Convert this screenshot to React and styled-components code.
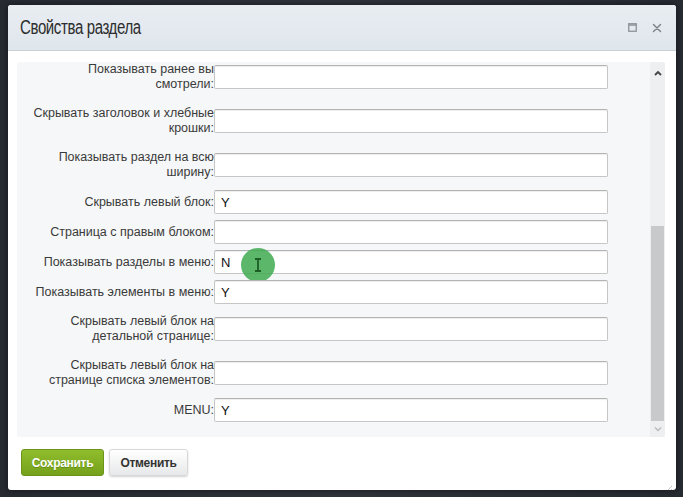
import React from "react";
import styled, { createGlobalStyle } from "styled-components";

const GlobalStyle = createGlobalStyle`
  html, body { margin: 0; padding: 0; }
  body {
    background: #2a2e35;
    font-family: "Liberation Sans", Arial, sans-serif;
  }
`;

const Backdrop = styled.div`
  width: 683px;
  height: 497px;
  box-sizing: border-box;
  padding: 5px 7px 7px 8px;
  background: linear-gradient(90deg, #262a31 0%, #2f333b 50%, #262a31 100%);
`;

const Dialog = styled.div`
  position: relative;
  height: 485px;
  background: #fff;
  border-radius: 3px;
  display: flex;
  flex-direction: column;
  overflow: hidden;
  box-shadow: 0 0 6px rgba(0, 0, 0, 0.5);
`;

const Header = styled.div`
  height: 45px;
  flex: none;
  display: flex;
  align-items: center;
  padding: 0 14px 0 12px;
  background: linear-gradient(#e8edf2, #dfe6ec);
  border-bottom: 1px solid #c9d0d6;
`;

const Title = styled.div`
  flex: 1;
  font-size: 20px;
  color: #2d2d2d;
  letter-spacing: -0.5px;
  transform: scaleX(0.75);
  transform-origin: left center;
  white-space: nowrap;
`;

const HeaderIcons = styled.div`
  display: flex;
  align-items: center;
  gap: 15px;
  color: #8a9096;
`;

const Body = styled.div`
  flex: 1;
  display: flex;
  flex-direction: column;
  padding: 11px 11px 0 9px;
`;

const Panel = styled.div`
  height: 375px;
  display: flex;
  background: #f6f7f8;
  border-radius: 2px;
  overflow: hidden;
`;

const Form = styled.div`
  flex: 1;
  overflow: hidden;
  padding-right: 42px;
`;

const Rows = styled.div`
  margin-top: -4px;
  display: flex;
  flex-direction: column;
  gap: 6px;
`;

const Row = styled.div`
  display: grid;
  grid-template-columns: 197px 1fr;
  align-items: center;
`;

const Label = styled.div`
  text-align: right;
  font-size: 12.5px;
  line-height: 15px;
  color: #3a3a3a;
  padding: ${(p) => (p.$multi ? "4px 0" : "0")};
  white-space: nowrap;
`;

const Field = styled.div`
  position: relative;
`;

const Input = styled.input`
  display: block;
  width: 100%;
  height: 24px;
  box-sizing: border-box;
  border: 1px solid #c6c6c6;
  border-top-color: #b3b3b3;
  border-radius: 2px;
  background: #fff;
  box-shadow: inset 0 1px 1px rgba(0, 0, 0, 0.07);
  padding: 0 6px;
  font-family: "Liberation Sans", Arial, sans-serif;
  font-size: 13px;
  color: #111;
  outline: none;
`;

const Cursor = styled.div`
  position: absolute;
  left: 27px;
  top: -2px;
  width: 34px;
  height: 34px;
  border-radius: 50%;
  background: rgba(64, 170, 80, 0.85);
  display: flex;
  align-items: center;
  justify-content: center;
`;

const Scrollbar = styled.div`
  width: 15px;
  flex: none;
  display: flex;
  flex-direction: column;
  background: #eeeff0;
`;

const Arrow = styled.div`
  height: ${(p) => p.$h}px;
  flex: none;
  display: flex;
  align-items: center;
  justify-content: center;
  color: ${(p) => p.$color};
`;

const Track = styled.div`
  flex: 1;
  display: flex;
  flex-direction: column;
  justify-content: flex-end;
`;

const Thumb = styled.div`
  height: 195px;
  background: #c8c9ca;
  margin: 0 1px;
`;

const Footer = styled.div`
  display: flex;
  gap: 5px;
  padding: 12px 0 0 4px;
`;

const Button = styled.button`
  height: 27px;
  width: ${(p) => p.$w}px;
  border-radius: 3px;
  font-family: "Liberation Sans", Arial, sans-serif;
  font-size: 12px;
  font-weight: bold;
  letter-spacing: -0.3px;
  cursor: pointer;
  ${(p) =>
    p.$primary
      ? `
    color: #fff;
    border: 1px solid #6b9418;
    background: linear-gradient(#90bd2c, #75a11c);
    text-shadow: 0 1px 0 rgba(0,0,0,0.2);
  `
      : `
    color: #333;
    border: 1px solid #d8d8d8;
    background: linear-gradient(#ffffff, #e7e8e9);
    box-shadow: 0 1px 2px rgba(0,0,0,0.18);
  `}
`;

const Grip = styled.div`
  position: absolute;
  right: 3px;
  bottom: 3px;
  width: 8px;
  height: 8px;
`;

const rows = [
  { label: ["Показывать ранее вы", "смотрели:"], value: "" },
  { label: ["Скрывать заголовок и хлебные", "крошки:"], value: "" },
  { label: ["Показывать раздел на всю", "ширину:"], value: "" },
  { label: ["Скрывать левый блок:"], value: "Y" },
  { label: ["Страница с правым блоком:"], value: "" },
  { label: ["Показывать разделы в меню:"], value: "N", cursor: true },
  { label: ["Показывать элементы в меню:"], value: "Y" },
  { label: ["Скрывать левый блок на", "детальной странице:"], value: "" },
  { label: ["Скрывать левый блок на", "странице списка элементов:"], value: "" },
  { label: ["MENU:"], value: "Y" },
];

export default function App() {
  return (
    <>
      <GlobalStyle />
      <Backdrop>
        <Dialog>
          <Header>
            <Title>Свойства раздела</Title>
            <HeaderIcons>
              <svg width="9" height="9" viewBox="0 0 9 9">
                <rect x="0.75" y="0.75" width="7.5" height="7.5" fill="none" stroke="#8c9298" strokeWidth="1.3" />
                <line x1="0.75" y1="2" x2="8.25" y2="2" stroke="#8c9298" strokeWidth="1.3" />
              </svg>
              <svg width="10" height="10" viewBox="0 0 10 10">
                <path d="M1.5 1.5 L8.5 8.5 M8.5 1.5 L1.5 8.5" stroke="#7f858b" strokeWidth="1.5" strokeLinecap="round" />
              </svg>
            </HeaderIcons>
          </Header>
          <Body>
            <Panel>
              <Form>
                <Rows>
                  {rows.map((r, i) => (
                    <Row key={i}>
                      <Label $multi={r.label.length > 1}>
                        {r.label.map((l, j) => (
                          <div key={j}>{l}</div>
                        ))}
                      </Label>
                      <Field>
                        <Input readOnly value={r.value} />
                        {r.cursor && (
                          <Cursor>
                            <svg width="10" height="14" viewBox="0 0 10 14">
                              <path
                                d="M2 1 H8 M5 1 V13 M2 13 H8"
                                stroke="#1d5e27"
                                strokeWidth="1.8"
                                fill="none"
                              />
                            </svg>
                          </Cursor>
                        )}
                      </Field>
                    </Row>
                  ))}
                </Rows>
              </Form>
              <Scrollbar>
                <Arrow $h={22} $color="#444">
                  <svg width="8" height="6" viewBox="0 0 8 6">
                    <path d="M1 5 L4 2 L7 5" stroke="currentColor" strokeWidth="1.8" fill="none" />
                  </svg>
                </Arrow>
                <Track>
                  <Thumb />
                </Track>
                <Arrow $h={16} $color="#b9bbbd">
                  <svg width="8" height="6" viewBox="0 0 8 6">
                    <path d="M1 1.5 L4 4.5 L7 1.5" stroke="currentColor" strokeWidth="1.5" fill="none" />
                  </svg>
                </Arrow>
              </Scrollbar>
            </Panel>
            <Footer>
              <Button $primary $w={83}>Сохранить</Button>
              <Button $w={79}>Отменить</Button>
            </Footer>
          </Body>
          <Grip>
            <svg width="8" height="8" viewBox="0 0 8 8">
              <path d="M7 1 L1 7 M7 4 L4 7" stroke="#c4c4c4" strokeWidth="1" />
            </svg>
          </Grip>
        </Dialog>
      </Backdrop>
    </>
  );
}
